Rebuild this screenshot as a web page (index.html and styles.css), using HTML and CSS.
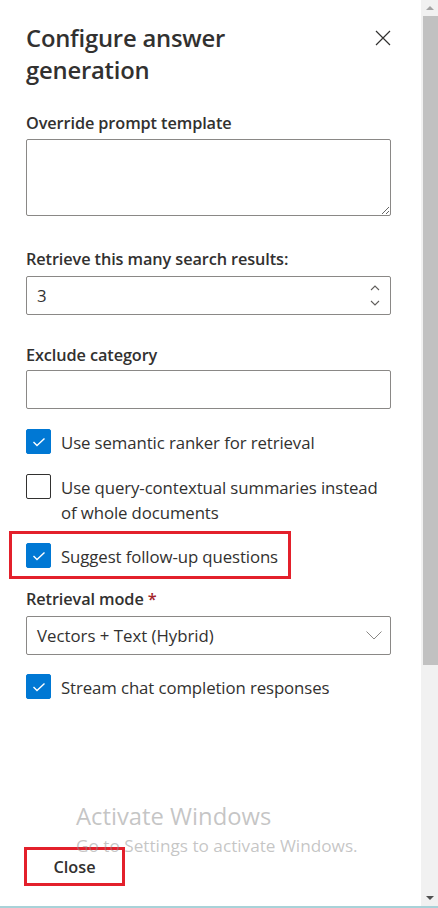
FILE: index.html
```html
<!DOCTYPE html>
<html lang="en">
<head>
<meta charset="utf-8">
<title>Configure answer generation</title>
<link rel="stylesheet" href="styles.css">
</head>
<body>
<div class="screen">
  <div class="panel">
    <div class="header">
      <h1 class="title">Configure answer generation</h1>
      <svg class="close-x" width="16" height="16" viewBox="0 0 16 16"><path d="M1 1 L15 15 M15 1 L1 15" stroke="#323130" stroke-width="1.2" fill="none"/></svg>
    </div>

    <label class="label label-first">Override prompt template</label>
    <textarea class="textarea"></textarea>

    <label class="label label-gap30">Retrieve this many search results:</label>
    <div class="field spin">
      <span class="value">3</span>
      <span class="spin-btns">
        <svg width="10" height="6" viewBox="0 0 10 6"><path d="M1 5 L5 1 L9 5" stroke="#605e5c" stroke-width="1.1" fill="none"/></svg>
        <svg width="10" height="6" viewBox="0 0 10 6"><path d="M1 1 L5 5 L9 1" stroke="#605e5c" stroke-width="1.1" fill="none"/></svg>
      </span>
    </div>

    <label class="label label-gap28">Exclude category</label>
    <div class="field field-exclude"></div>

    <div class="check check-first">
      <span class="box checked"><svg width="14" height="10" viewBox="0 0 14 10"><path d="M1.5 5 L5 8.5 L12.5 1.5" stroke="#fff" stroke-width="1.4" fill="none"/></svg></span>
      <span class="check-text">Use semantic ranker for retrieval</span>
    </div>

    <div class="check check-gap">
      <span class="box"></span>
      <span class="check-text">Use query-contextual summaries instead of whole documents</span>
    </div>

    <div class="highlight">
      <div class="check">
        <span class="box checked"><svg width="14" height="10" viewBox="0 0 14 10"><path d="M1.5 5 L5 8.5 L12.5 1.5" stroke="#fff" stroke-width="1.4" fill="none"/></svg></span>
        <span class="check-text">Suggest follow-up questions</span>
      </div>
    </div>

    <label class="label label-mode">Retrieval mode <span class="req">*</span></label>
    <div class="field dropdown">
      <span class="value">Vectors + Text (Hybrid)</span>
      <svg width="16" height="9" viewBox="0 0 16 9"><path d="M0.5 0.5 L8 8 L15.5 0.5" stroke="#8a8886" stroke-width="1" fill="none"/></svg>
    </div>

    <div class="check check-gap">
      <span class="box checked"><svg width="14" height="10" viewBox="0 0 14 10"><path d="M1.5 5 L5 8.5 L12.5 1.5" stroke="#fff" stroke-width="1.4" fill="none"/></svg></span>
      <span class="check-text">Stream chat completion responses</span>
    </div>

    <div class="footer">
      <button class="close-btn">Close</button>
    </div>

    <div class="watermark">
      <div class="wm-title">Activate Windows</div>
      <div class="wm-sub">Go to Settings to activate Windows.</div>
    </div>
  </div>

  <div class="scrollbar">
    <div class="arrow-up"></div>
    <div class="thumb"></div>
    <div class="track-rest"></div>
    <div class="arrow-down"></div>
  </div>
</div>
<div class="bottom-line"></div>
</body>
</html>
```

FILE: styles.css
```css
* { box-sizing: border-box; }
html, body { margin: 0; padding: 0; background: #fff; }
body {
  font-family: "Open Sans", "Noto Sans", sans-serif;
  color: #323130;
  width: 438px;
  height: 908px;
  overflow: hidden;
}
.screen {
  display: flex;
  height: 906px;
}
.panel {
  position: relative;
  width: 421px;
  padding: 0 30px 0 26px;
  display: flex;
  flex-direction: column;
}
.header {
  display: flex;
  justify-content: space-between;
  align-items: flex-start;
  padding-top: 22px;
}
.title {
  margin: 0;
  font-size: 23.8px;
  line-height: 32px;
  font-weight: 600;
  width: 240px;
  letter-spacing: -0.2px;
}
.close-x { margin-top: 8px; }

.label {
  display: block;
  font-size: 16.3px;
  line-height: 24px;
  font-weight: 600;
  letter-spacing: -0.1px;
}
.label-first { margin-top: 25px; }
.label-gap30 { margin-top: 31px; }
.label-gap28 { margin-top: 28px; }
.label-mode { margin-top: 8px; }
.req { color: #a4262c; }

.textarea {
  display: block;
  margin-top: 4px;
  width: 365px;
  height: 77px;
  border: 1px solid #8a8886;
  border-radius: 2px;
  resize: vertical;
  font: inherit;
}
.field {
  margin-top: 5px;
  width: 365px;
  height: 39px;
  border: 1px solid #8a8886;
  border-radius: 2px;
  display: flex;
  align-items: center;
  padding: 0 10px;
  font-size: 16.8px;
}
.field-exclude { margin-top: 3px; }
.spin { justify-content: space-between; }
.spin-btns {
  display: flex;
  flex-direction: column;
  gap: 9px;
  margin-right: 0;
}
.dropdown { justify-content: space-between; padding-right: 8px; }

.check {
  display: flex;
  align-items: flex-start;
  gap: 10px;
}
.check-first { margin-top: 20px; }
.check-gap { margin-top: 19px; }
.box {
  flex: none;
  width: 25px;
  height: 25px;
  border: 1px solid #323130;
  border-radius: 2px;
  display: flex;
  align-items: center;
  justify-content: center;
}
.box.checked {
  background: #0078d4;
  border-color: #0078d4;
}
.check-text {
  font-size: 16.8px;
  line-height: 25px;
  margin-top: 1px;
  letter-spacing: -0.1px;
  max-width: 320px;
}
.highlight {
  margin-top: 6px;
  margin-left: -17px;
  width: 282px;
  height: 48px;
  border: 3px solid #e3202b;
  padding: 9px 0 0 14px;
}

.footer {
  margin-top: auto;
  padding-bottom: 20px;
}
.close-btn {
  margin-left: -2px;
  width: 101px;
  height: 39px;
  border: 3px solid #e3202b;
  background: #fff;
  font-family: inherit;
  font-size: 16.3px;
  font-weight: 600;
  color: #323130;
  padding: 0;
}

.watermark {
  position: absolute;
  left: 76px;
  top: 799px;
  color: rgba(140, 140, 140, 0.5);
  pointer-events: none;
}
.wm-title {
  font-size: 23.8px;
  line-height: 34px;
}
.wm-sub {
  font-size: 17.2px;
  line-height: 24px;
  margin-top: 1px;
}

.scrollbar {
  width: 17px;
  background: #f1f1f1;
  display: flex;
  flex-direction: column;
  align-items: flex-end;
}
.arrow-up, .arrow-down {
  width: 17px;
  height: 16px;
  display: flex;
  align-items: center;
  justify-content: center;
}
.arrow-up::before {
  content: "";
  border-left: 4px solid transparent;
  border-right: 4px solid transparent;
  border-bottom: 4px solid #a3a3a3;
}
.arrow-down::before {
  content: "";
  border-left: 4px solid transparent;
  border-right: 4px solid transparent;
  border-top: 4px solid #505050;
}
.thumb {
  width: 15px;
  height: 649px;
  background: #c1c1c1;
}
.track-rest { flex: 1; }
.bottom-line {
  height: 2px;
  background: #a8d2d8;
}
```
